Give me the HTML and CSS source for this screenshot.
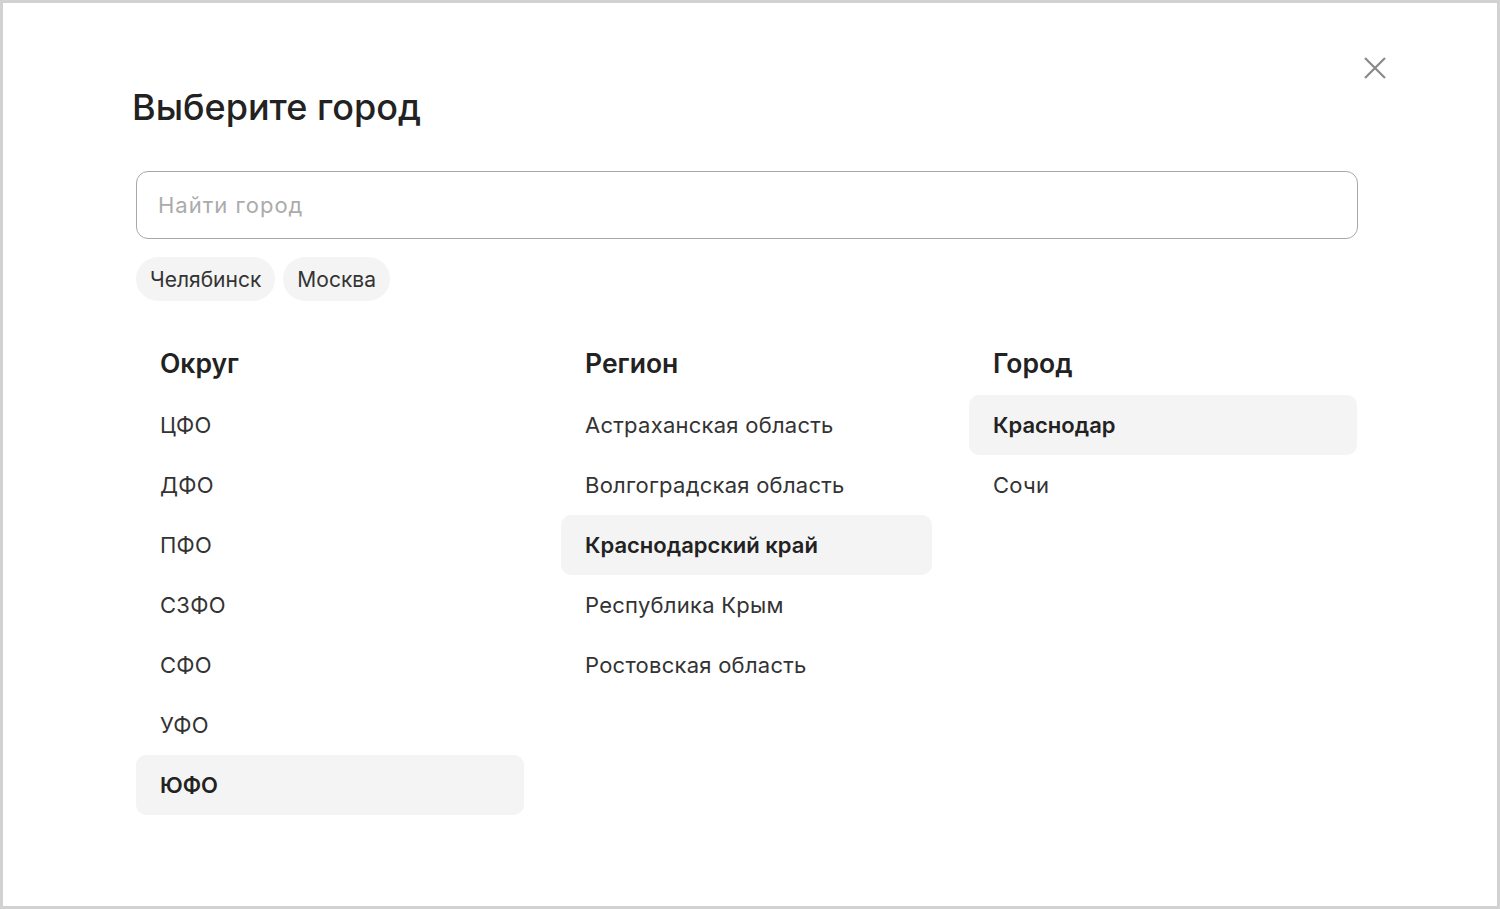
FILE: index.html
```html
<!DOCTYPE html>
<html lang="ru">
<head>
<meta charset="utf-8">
<title>Выберите город</title>
<link rel="stylesheet" href="styles.css">
</head>
<body>
<div class="frame">
  <div class="modal">
    <button class="close" aria-label="Закрыть">
      <svg width="24" height="24" viewBox="0 0 24 24"><path d="M2 2L22 22M22 2L2 22" stroke="#8a8a8a" stroke-width="2.2" fill="none"/></svg>
    </button>
    <h1 class="title">Выберите город</h1>
    <div class="search"><span class="placeholder">Найти город</span></div>
    <div class="chips">
      <span class="chip">Челябинск</span>
      <span class="chip">Москва</span>
    </div>
    <div class="columns">
      <div class="col">
        <div class="head">Округ</div>
        <div class="item">ЦФО</div>
        <div class="item">ДФО</div>
        <div class="item">ПФО</div>
        <div class="item">СЗФО</div>
        <div class="item">СФО</div>
        <div class="item">УФО</div>
        <div class="item active">ЮФО</div>
      </div>
      <div class="col">
        <div class="head">Регион</div>
        <div class="item">Астраханская область</div>
        <div class="item">Волгоградская область</div>
        <div class="item active">Краснодарский край</div>
        <div class="item">Республика Крым</div>
        <div class="item">Ростовская область</div>
      </div>
      <div class="col">
        <div class="head">Город</div>
        <div class="item active">Краснодар</div>
        <div class="item">Сочи</div>
      </div>
    </div>
  </div>
</div>
</body>
</html>
```

FILE: styles.css
```css
* { box-sizing: border-box; }
html, body { margin: 0; padding: 0; background: #fff; }
body { font-family: Inter, "Noto Sans", sans-serif; color: #222; }
.frame {
  width: 1500px;
  height: 909px;
  border: 3px solid #d2d2d2;
  background: #fff;
}
.modal {
  position: relative;
  padding: 78px 140px 0 130px;
}
.close {
  position: absolute;
  top: 50px;
  left: 1357px;
  width: 30px;
  height: 30px;
  padding: 0;
  border: 0;
  background: none;
  display: flex;
  align-items: center;
  justify-content: center;
}
.title {
  margin: 0 0 0 -1px;
  font-size: 36px;
  line-height: 52px;
  font-weight: 500;
  color: #222;
}
.search {
  margin: 38px 0 0 3px;
  width: 1222px;
  height: 68px;
  border: 1px solid #a8a8a8;
  border-radius: 12px;
  display: flex;
  align-items: center;
  padding-left: 21px;
}
.placeholder { font-size: 22px; letter-spacing: 1px; color: #ababab; }
.chips {
  margin: 18px 0 0 3px;
  display: flex;
  gap: 8px;
}
.chip {
  height: 44px;
  padding: 0 14px;
  border-radius: 22px;
  background: #f4f4f4;
  font-size: 21px;
  color: #333;
  display: flex;
  align-items: center;
}
.columns {
  margin: 34px 0 0 3px;
  display: grid;
  grid-template-columns: 388px 371px 388px;
  column-gap: 37px;
  align-items: start;
}
.col { display: flex; flex-direction: column; }
.head {
  height: 60px;
  padding: 0 0 4px 24px;
  display: flex;
  align-items: center;
  font-size: 26.5px;
  font-weight: 600;
  color: #222;
}
.item {
  height: 60px;
  padding-left: 24px;
  display: flex;
  align-items: center;
  font-size: 22px;
  letter-spacing: 0.25px;
  color: #333;
  border-radius: 10px;
}
.item.active {
  background: #f4f4f4;
  font-weight: 600;
  letter-spacing: 0;
  color: #222;
}
```
